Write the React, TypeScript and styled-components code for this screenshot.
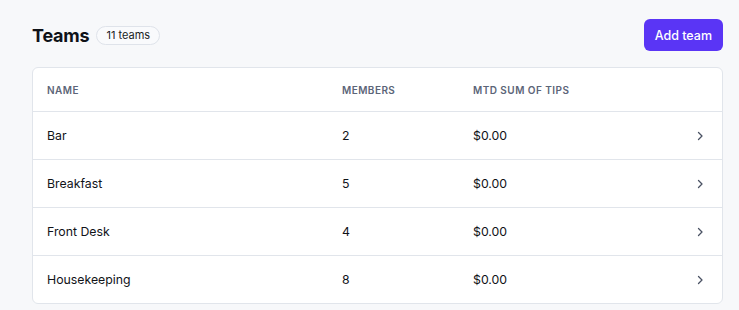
import React from "react";
import styled, { createGlobalStyle } from "styled-components";

const Global = createGlobalStyle`
  html, body { margin: 0; padding: 0; background: #f7f8fa; }
  body { font-family: Inter, "Noto Sans", sans-serif; color: #111318; -webkit-font-smoothing: antialiased; }
`;

const Page = styled.div`
  padding: 19px 16px 0 32px;
`;

const Header = styled.div`
  display: flex;
  align-items: center;
  justify-content: space-between;
  height: 32px;
  margin-bottom: 16px;
`;

const TitleGroup = styled.div`
  display: flex;
  align-items: center;
  gap: 7px;
`;

const Title = styled.h1`
  margin: 0;
  font-size: 18px;
  font-weight: 700;
  letter-spacing: -0.2px;
  color: #0f1218;
`;

const Badge = styled.span`
  display: inline-flex;
  align-items: center;
  height: 17px;
  padding: 0 9px;
  border: 1px solid #dfe3ea;
  border-radius: 10px;
  background: #f9fafc;
  font-size: 11px;
  color: #1a1d24;
`;

const Button = styled.button`
  height: 32px;
  padding: 0 11px;
  border: none;
  border-radius: 6px;
  background: #5a35f5;
  color: #fff;
  font-family: inherit;
  font-size: 12.5px;
  font-weight: 500;
`;

const Card = styled.div`
  background: #fff;
  border: 1px solid #e1e5eb;
  border-radius: 6px;
  overflow: hidden;
`;

const Row = styled.div<{ $head?: boolean }>`
  display: grid;
  grid-template-columns: 295px 131px 1fr 28px;
  align-items: center;
  height: ${(p) => (p.$head ? 43 : 47)}px;
  padding-left: 14px;
  border-top: ${(p) => (p.$head ? "none" : "1px solid #e1e5eb")};
`;

const HeadCell = styled.div`
  font-size: 10px;
  font-weight: 600;
  letter-spacing: 0.45px;
  text-transform: uppercase;
  color: #5c6578;
`;

const Cell = styled.div`
  font-size: 12.3px;
  color: #111318;
`;

const Chevron = () => (
  <svg width="12" height="12" viewBox="0 0 12 12" fill="none">
    <path d="M4.5 2.5 L8 6 L4.5 9.5" stroke="#4a5263" strokeWidth="1.3" strokeLinecap="round" strokeLinejoin="round" />
  </svg>
);

const teams = [
  { name: "Bar", members: 2, tips: "$0.00" },
  { name: "Breakfast", members: 5, tips: "$0.00" },
  { name: "Front Desk", members: 4, tips: "$0.00" },
  { name: "Housekeeping", members: 8, tips: "$0.00" },
];

export default function App() {
  return (
    <>
      <Global />
      <Page>
        <Header>
          <TitleGroup>
            <Title>Teams</Title>
            <Badge>11 teams</Badge>
          </TitleGroup>
          <Button>Add team</Button>
        </Header>
        <Card>
          <Row $head>
            <HeadCell>Name</HeadCell>
            <HeadCell>Members</HeadCell>
            <HeadCell>MTD sum of tips</HeadCell>
            <span />
          </Row>
          {teams.map((t) => (
            <Row key={t.name}>
              <Cell>{t.name}</Cell>
              <Cell>{t.members}</Cell>
              <Cell>{t.tips}</Cell>
              <Chevron />
            </Row>
          ))}
        </Card>
      </Page>
    </>
  );
}
